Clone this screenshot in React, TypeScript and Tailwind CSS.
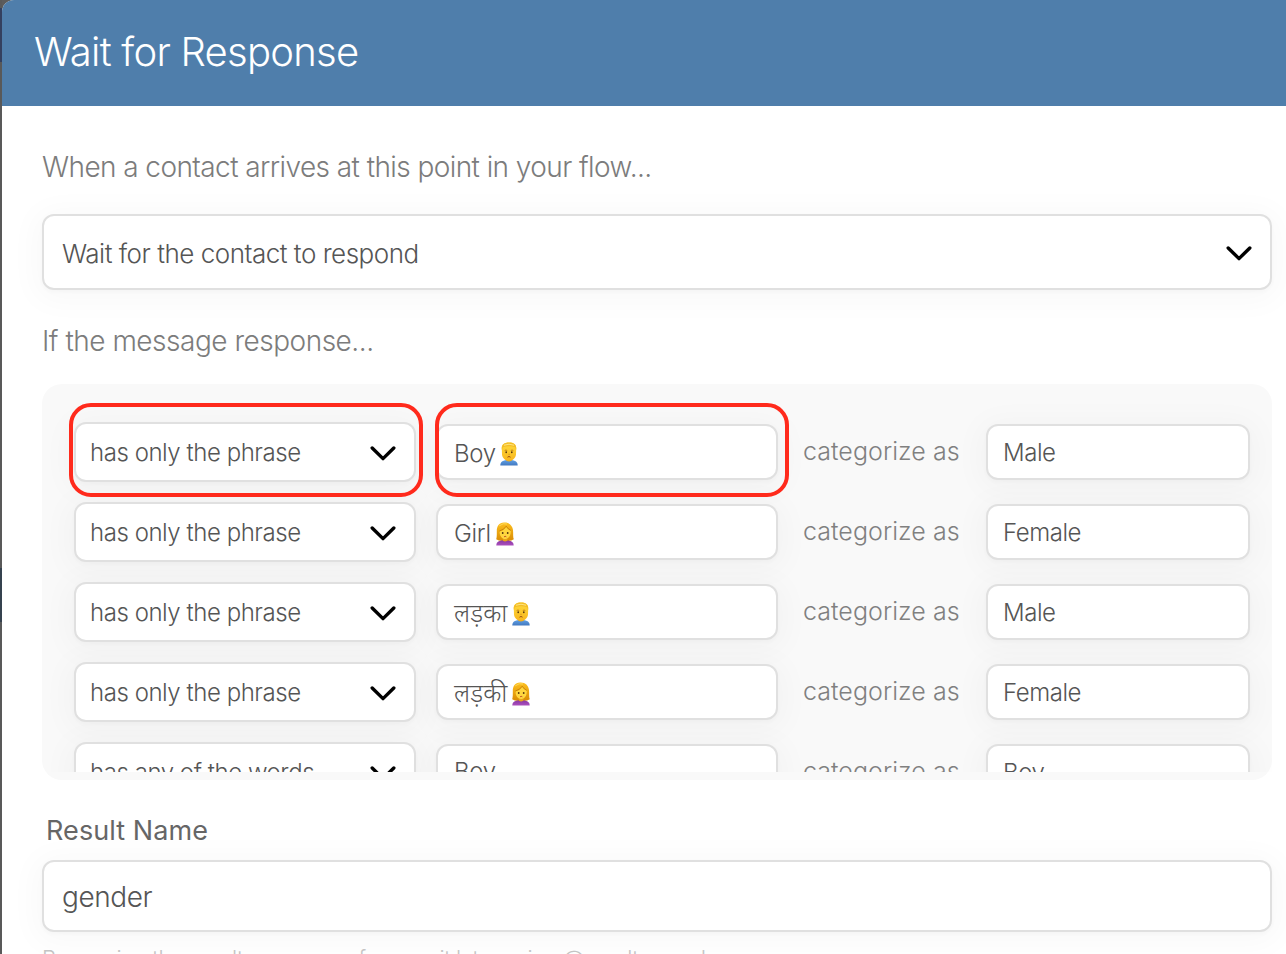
import type { ReactNode } from "react";

const fieldShadow = "shadow-[0_2px_5px_rgba(0,0,0,0.025),0_4px_30px_8px_rgba(0,0,0,0.026)]";

type Rule = { operator: string; value: string; face?: "man" | "woman"; category: string };

const rules: Rule[] = [
  { operator: "has only the phrase", value: "Boy", face: "man", category: "Male" },
  { operator: "has only the phrase", value: "Girl", face: "woman", category: "Female" },
  { operator: "has only the phrase", value: "लड़का", face: "man", category: "Male" },
  { operator: "has only the phrase", value: "लड़की", face: "woman", category: "Female" },
  { operator: "has any of the words", value: "Boy", category: "Boy" },
];

function Chevron() {
  return (
    <svg className="h-[15px] w-[26px] shrink-0" viewBox="0 0 26 15" fill="none" stroke="#000" strokeWidth="3.4" strokeLinecap="round" strokeLinejoin="round">
      <path d="M2.2 2 L13 12.6 L23.8 2" />
    </svg>
  );
}

function ManFace() {
  return (
    <svg className="h-[24px] w-[18px] shrink-0" viewBox="0 0 18 24">
      <defs>
        <linearGradient id="manSkin" x1="0" y1="0" x2="0" y2="1">
          <stop offset="0" stopColor="#ffdc3d" />
          <stop offset="1" stopColor="#f8b51d" />
        </linearGradient>
        <linearGradient id="manShirt" x1="0" y1="0" x2="0" y2="1">
          <stop offset="0" stopColor="#5f9fe3" />
          <stop offset="1" stopColor="#4379c0" />
        </linearGradient>
      </defs>
      <path d="M0.3 23.5 C0.3 19.5 3 18 9 18 C15 18 17.7 19.5 17.7 23.5 Z" fill="url(#manShirt)" />
      <path d="M6.2 16 H11.8 V18.6 Q9 20.4 6.2 18.6 Z" fill="#e7a01b" />
      <path d="M1.8 7 C1.3 2.2 4.5 .6 9 .6 C13.5 .6 16.6 2.2 16.2 7 L16 12.5 C15.6 16.6 12 18.8 9 18.8 C6 18.8 2.4 16.6 2 12.5 Z" fill="url(#manSkin)" />
      <path d="M1.9 8 C1 3 4 .4 9 .4 C14.3 .4 17 3 16.1 8 L15.1 5.2 Q9 3.4 3 5.2 Z" fill="#f3bd28" />
      <path d="M4 3.2 Q9 1.3 14 3.2" stroke="#ffe681" strokeWidth="1" fill="none" />
      <path d="M4.7 8.5 Q6 7.6 7.2 8.5 M10.8 8.5 Q12 7.6 13.3 8.5" stroke="#a9650b" strokeWidth=".7" fill="none" />
      <ellipse cx="6.2" cy="10.3" rx=".85" ry="1" fill="#54350e" />
      <ellipse cx="11.8" cy="10.3" rx=".85" ry="1" fill="#54350e" />
      <path d="M8.5 12.3 Q9 12.7 9.6 12.3" stroke="#c77d12" strokeWidth=".7" fill="none" />
      <path d="M7.5 15.2 Q9 13.7 10.5 15.2" stroke="#9b4c13" strokeWidth="1" fill="none" />
    </svg>
  );
}

function WomanFace() {
  return (
    <svg className="h-[24px] w-[18px] shrink-0" viewBox="0 0 18 24">
      <defs>
        <linearGradient id="womanHair" x1="0" y1="0" x2="0" y2="1">
          <stop offset="0" stopColor="#fdc01f" />
          <stop offset="1" stopColor="#d98a04" />
        </linearGradient>
        <linearGradient id="womanShirt" x1="0" y1="0" x2="0" y2="1">
          <stop offset="0" stopColor="#8937a4" />
          <stop offset="1" stopColor="#ab50bd" />
        </linearGradient>
      </defs>
      <path d="M8 .6 C3 .6 .8 4.5 .8 9 C.8 13 .9 15 .2 17.3 Q3 19.6 9 19 Q15 19.6 17.8 17.3 C16.8 15 17.4 12 17 8 C16.5 3.5 13 .2 8 .6Z" fill="url(#womanHair)" />
      <path d="M.3 23.5 C.3 19.8 3 18.3 9 18.3 C15 18.3 17.7 19.8 17.7 23.5 Z" fill="url(#womanShirt)" />
      <path d="M6.8 16 H11.4 V18.8 Q9 20.4 6.8 18.8 Z" fill="#e8a41c" />
      <path d="M3.6 9.5 Q8 8.6 10.3 5 Q12.3 7.8 14.8 8.8 C15 14 12.4 17 9.2 17 C6 17 3.4 14 3.6 9.5Z" fill="#ffd63f" />
      <path d="M3.4 9 Q8 7.9 10.2 4.2 Q12 7.4 14.8 8.4" stroke="#b97405" strokeWidth=".7" fill="none" />
      <path d="M3.3 3.8 Q7.4 .6 11 2" stroke="#ffe16a" strokeWidth=".8" fill="none" />
      <ellipse cx="6.7" cy="11.1" rx=".9" ry="1" fill="#54350e" />
      <ellipse cx="11.7" cy="11.1" rx=".9" ry="1" fill="#54350e" />
      <path d="M8.1 14.8 Q9.2 13.8 10.3 14.8" stroke="#b4372a" strokeWidth=".9" fill="none" />
    </svg>
  );
}

function Field({ children, className }: { children: ReactNode; className: string }) {
  return (
    <div className={`flex shrink-0 items-center whitespace-nowrap border-2 border-[#e0e0e0] bg-white text-[#555] ${fieldShadow} ${className}`}>
      {children}
    </div>
  );
}

function RuleRow({ rule }: { rule: Rule }) {
  const hindi = /[\u0900-\u097f]/.test(rule.value);
  return (
    <div className="flex h-[60px] shrink-0 items-center text-[24px] tracking-[-0.45px]">
      <Field className="h-[60px] w-[342px] justify-between rounded-[12px] pr-[18px] pl-[14px]">
        <span className="pt-px">{rule.operator}</span>
        <span className="flex pt-[2px]"><Chevron /></span>
      </Field>
      <Field className={`ml-[20px] h-[56px] w-[342px] rounded-[12px] pl-[16px] ${rule.face ? "pt-[4px]" : ""}`}>
        <span className={hindi ? "text-[25px] tracking-[0.1px]" : "tracking-[-0.3px]"}>{rule.value}</span>
        {rule.face && (
          <span className={`flex pb-px ${hindi || rule.face === "woman" ? "ml-[5px]" : "ml-[4px]"}`}>
            {rule.face === "man" ? <ManFace /> : <WomanFace />}
          </span>
        )}
      </Field>
      <span className="ml-[25px] w-[183px] text-[25px] tracking-[0.05px] whitespace-nowrap text-[#808080]">categorize as</span>
      <Field className="h-[56px] w-[264px] rounded-[12px] pt-px pl-[15px]">
        <span>{rule.category}</span>
      </Field>
    </div>
  );
}

export default function App() {
  return (
    <div className="flex h-[954px] w-[1286px] overflow-hidden bg-[#5c5c5c] font-['Inter','Noto_Sans',sans-serif] font-light">
      <div className="flex w-[2px] shrink-0 flex-col bg-[#595959]">
        <div className="mt-[8px] h-[54px] bg-[#34405f]" />
        <div className="mt-[506px] h-[54px] bg-[#35424f]" />
      </div>
      <div className="flex h-[1000px] w-[1284px] shrink-0 flex-col rounded-tl-[12px] bg-white">
        <header className="flex h-[106px] shrink-0 items-center rounded-tl-[12px] bg-[#4f7eab] pb-[2px] pl-[32px]">
          <h1 className="text-[40px] leading-none tracking-[-0.75px] whitespace-nowrap text-white">Wait for Response</h1>
        </header>
        <main className="flex w-[1270px] flex-col pl-[40px]">
          <p className="mt-[41px] h-[40px] text-[28px] leading-[40px] tracking-[-0.58px] whitespace-nowrap text-[#7c7c7c]">
            When a contact arrives at this point in your flow...
          </p>
          <Field className="mt-[27px] h-[76px] w-[1230px] justify-between rounded-[12px] pr-[18px] pl-[18px] text-[26px] tracking-[-0.49px]">
            <span className="pt-[2px]">Wait for the contact to respond</span>
            <span className="flex pt-[2px]"><Chevron /></span>
          </Field>
          <p className="mt-[31px] h-[40px] text-[28px] leading-[40px] tracking-[-0.49px] whitespace-nowrap text-[#7c7c7c]">
            If the message response...
          </p>
          <section className="relative mt-[23px] h-[396px] w-[1230px] rounded-[20px] bg-[#f9f9f9] pb-[8px]">
            <div className="flex h-[388px] flex-col gap-[20px] overflow-hidden rounded-t-[20px] pt-[38px] pl-[32px]">
              {rules.map((rule, i) => (
                <RuleRow key={i} rule={rule} />
              ))}
            </div>
            <div className="absolute top-[19px] left-[27px] h-[94px] w-[354px] rounded-[22px] border-4 border-[#ff2a1c]" />
            <div className="absolute top-[19px] left-[393px] h-[94px] w-[354px] rounded-[22px] border-4 border-[#ff2a1c]" />
          </section>
          <label className="mt-[31px] h-[40px] pl-[4px] text-[27px] leading-[40px] font-normal tracking-[0.08px] text-[#666]">Result Name</label>
          <Field className="mt-[9px] h-[72px] w-[1230px] rounded-[12px] pt-px pl-[18px] text-[28px] tracking-[-0.45px]">
            <span>gender</span>
          </Field>
          <p className="mt-[11px] text-[22px] leading-[30px] tracking-[-0.42px] whitespace-nowrap text-[#c4c4c4]">
            By naming the result, you can reference it later using @results.gender
          </p>
        </main>
      </div>
    </div>
  );
}
